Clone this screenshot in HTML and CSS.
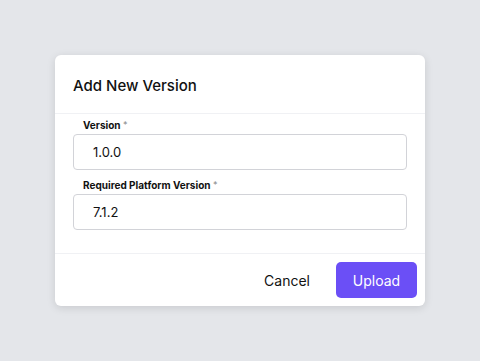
FILE: index.html
```html
<!DOCTYPE html>
<html lang="en">
<head>
    <meta charset="UTF-8">
    <meta name="viewport" content="width=device-width, initial-scale=1.0">
    <title>Add New Version</title>
    <link rel="stylesheet" href="styles.css">
</head>
<body>
    <div class="modal">
        <!-- Header -->
        <div class="modal-header">
            <h1>Add New Version</h1>
        </div>

        <!-- Form -->
        <form class="modal-body" id="versionForm">
            <div class="form-group">
                <label for="version">Version <span class="req">*</span></label>
                <input type="text" id="version" name="version" value="1.0.0">
            </div>
            <div class="form-group">
                <label for="platformVersion">Required Platform Version <span class="req">*</span></label>
                <input type="text" id="platformVersion" name="platformVersion" value="7.1.2">
            </div>
        </form>

        <!-- Footer -->
        <div class="modal-footer">
            <button type="button" class="btn-cancel">Cancel</button>
            <button type="submit" form="versionForm" class="btn-upload">Upload</button>
        </div>
    </div>
</body>
</html>
```

FILE: styles.css
```css
/* General body styling */
body {
    font-family: 'Inter', 'Liberation Sans', sans-serif;
    background: #e4e6ea;
    margin: 0;
    display: flex;
    justify-content: center;
    align-items: center;
    height: 361px;
}

.modal {
    background: #fff;
    width: 370px;
    border-radius: 6px;
    box-shadow: 0 2px 8px rgba(0, 0, 0, 0.12);
}

/* Header */
.modal-header {
    height: 58px;
    padding: 0 18px;
    display: flex;
    align-items: center;
    border-bottom: 1px solid #f0f1f4;
}

.modal-header h1 {
    font-size: 15px;
    font-weight: 500;
    color: #111;
    margin: 0;
    padding-top: 2px;
}

/* Body */
.modal-body {
    padding: 3px 18px 23px;
    display: flex;
    flex-direction: column;
    gap: 7px;
    border-bottom: 1px solid #f0f1f4;
}

label {
    display: block;
    font-size: 10px;
    font-weight: 700;
    line-height: 16px;
    color: #111;
    padding-left: 10px;
    margin-bottom: 1px;
}

.req {
    color: #888;
    font-weight: 400;
    font-size: 9px;
    vertical-align: top;
}

input {
    width: 100%;
    height: 36px;
    padding: 0 19px;
    font-family: inherit;
    font-size: 13px;
    color: #111;
    border: 1px solid #d2d3d8;
    border-radius: 4px;
    box-sizing: border-box;
}

input:focus {
    outline: none;
    border-color: #6b4ff6;
}

/* Footer */
.modal-footer {
    display: flex;
    justify-content: flex-end;
    gap: 10px;
    padding: 8px;
}

button {
    height: 36px;
    padding: 0 16px;
    font-family: inherit;
    font-size: 14px;
    border: none;
    border-radius: 5px;
    cursor: pointer;
}

.btn-cancel {
    background: none;
    color: #111;
}

.btn-upload {
    width: 81px;
    background: #6b4ff6;
    color: #fff;
}

.btn-upload:hover {
    background: #5a3ee6;
}
```
